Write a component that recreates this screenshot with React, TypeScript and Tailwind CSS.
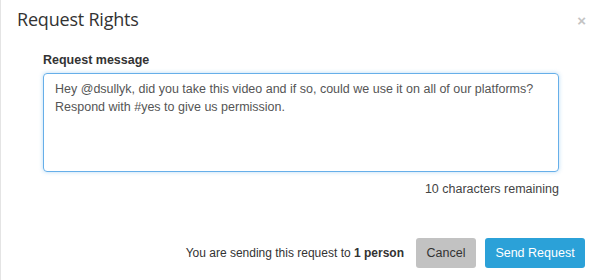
import React, { useState } from 'react';

export default function App() {
  const [message, setMessage] = useState(
    'Hey @dsullyk, did you take this video and if so, could we use it on all of our platforms? Respond with #yes to give us permission.'
  );

  return (
    <div className="w-[600px] h-[280px] bg-white border-l border-[#e4e4e4] flex flex-col font-['Liberation_Sans',Arial,sans-serif] text-[#333]">
      {/* header */}
      <div className="flex items-start justify-between pl-[16px] pr-[14px] pt-[6px] h-[40px]">
        <h1 className="font-['Open_Sans',sans-serif] text-[18px] leading-[26px] text-[#333] tracking-[-0.2px]">Request Rights</h1>
        <button className="text-[#c4c4c4] text-[15px] leading-none mt-[7px] font-bold">×</button>
      </div>

      <div className="pl-[42px] pr-[41px]">
        <label className="block text-[12.5px] font-bold text-[#333] leading-[16px] mt-[12px] mb-[5px]">Request message</label>
        <textarea
          value={message}
          onChange={(e) => setMessage(e.target.value)}
          className="w-full h-[99px] resize-none rounded-[4px] border border-[#66afe9] shadow-[0_0_4px_rgba(102,175,233,0.45)] outline-none px-[11px] py-[6px] text-[12.5px] leading-[18px] text-[#555]"
        />
        <div className="text-right text-[12.5px] text-[#444] mt-[2px] leading-[16px]">10 characters remaining</div>
      </div>

      <div className="mt-auto mb-[12px] flex items-center justify-end gap-[9px] pr-[15px]">
        <span className="text-[12px] text-[#333] mr-[3px]">
          You are sending this request to <b>1 person</b>
        </span>
        <button className="h-[30px] w-[60px] rounded-[3px] bg-[#c2c2c2] text-[#333] text-[12.5px]">Cancel</button>
        <button className="h-[30px] w-[100px] rounded-[3px] bg-[#2ba1d8] text-white text-[12.5px]">Send Request</button>
      </div>
    </div>
  );
}
